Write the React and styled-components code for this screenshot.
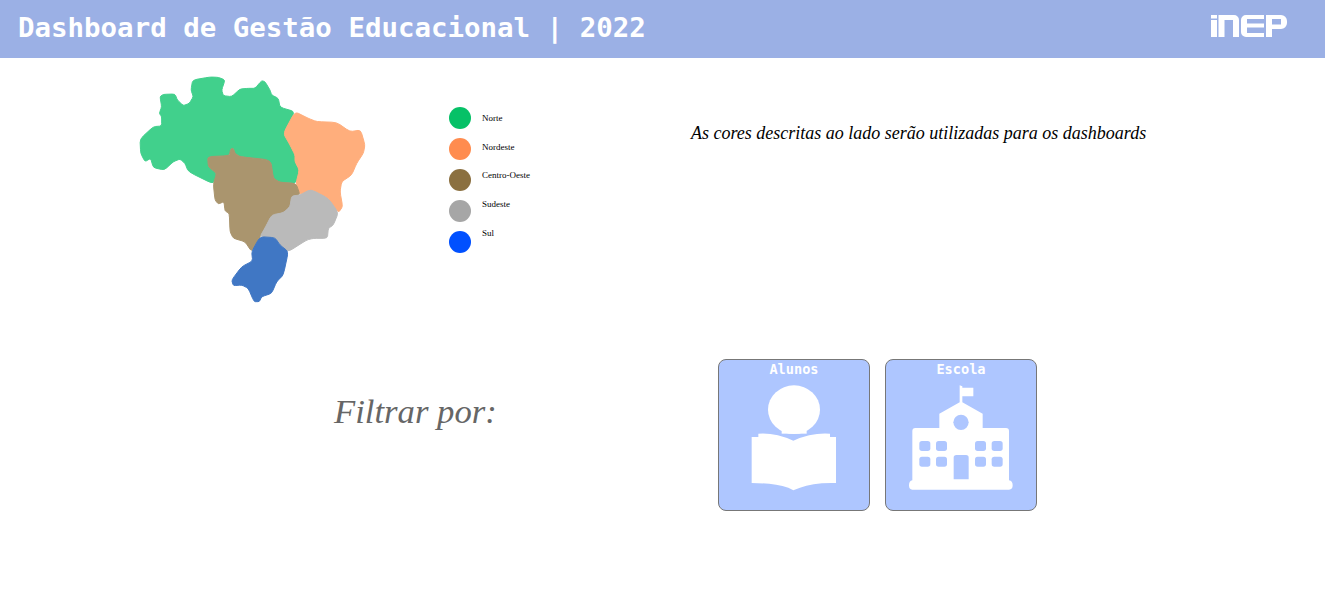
import React from "react";
import styled, { createGlobalStyle } from "styled-components";

const GlobalStyle = createGlobalStyle`
  html, body { margin: 0; padding: 0; background: #ffffff; }
`;

const Page = styled.div`
  width: 1325px;
  height: 593px;
  overflow: hidden;
  font-family: "Liberation Serif", serif;
`;
const Header = styled.header`
  height: 58px;
  box-sizing: border-box;
  background-color: #9bb0e5;
  display: flex;
  align-items: center;
  justify-content: space-between;
  padding: 0 38px 4px 18px;
`;
const Title = styled.h1`
  margin: 0;
  font-family: "DejaVu Sans Mono", monospace;
  font-size: 27.45px;
  font-weight: 700;
  color: #ffffff;
  white-space: nowrap;
`;
const Logo = styled.svg`
  display: block;
  margin-bottom: 3px;
`;
const TopRow = styled.section`
  height: 301px;
  display: flex;
  align-items: flex-start;
`;
const MapWrap = styled.div`
  width: 260px;
  height: 245px;
  margin: 7px 0 0 120px;
`;
const Legend = styled.div`
  display: flex;
  gap: 11px;
  margin: 49px 0 0 69px;
  width: 242px;
`;
const Dots = styled.div`
  display: flex;
  flex-direction: column;
  gap: 9px;
`;
const Dot = styled.span`
  display: block;
  width: 22px;
  height: 22px;
  border-radius: 50%;
  background-color: ${(props) => props.color};
`;
const Labels = styled.div`
  display: flex;
  flex-direction: column;
  margin-top: -3px;
`;
const Label = styled.span`
  height: 28.7px;
  line-height: 28px;
  font-size: 9px;
  color: #000000;
  white-space: nowrap;
`;
const Note = styled.p`
  margin: 65px 0 0 0;
  font-size: 18px;
  line-height: 20px;
  font-style: italic;
  color: #000000;
  white-space: nowrap;
`;
const BottomRow = styled.section`
  display: flex;
  align-items: flex-start;
  padding-left: 334px;
`;
const FilterTitle = styled.h2`
  width: 384px;
  margin: 31px 0 0 0;
  font-size: 34.7px;
  line-height: 44px;
  font-weight: 400;
  font-style: italic;
  color: #666666;
`;
const Cards = styled.div`
  display: flex;
  gap: 15px;
`;
const Card = styled.button`
  width: 152px;
  height: 152px;
  box-sizing: border-box;
  padding: 0;
  border: 1px solid #777777;
  border-radius: 8px;
  background-color: #aec6ff;
  display: flex;
  flex-direction: column;
  align-items: center;
`;
const CardLabel = styled.span`
  font-family: "DejaVu Sans Mono", monospace;
  font-size: 13.6px;
  line-height: 18px;
  font-weight: 700;
  color: #ffffff;
`;
const CardIcon = styled.svg`
  display: block;
  width: 150px;
  height: 132px;
`;

// pontos em coordenadas 3x do recorte do mapa, com cantos levemente arredondados
const outline = (pts) => {
  const lerp = (a, b, t) => [a[0] + (b[0] - a[0]) * t, a[1] + (b[1] - a[1]) * t];
  let d = "";
  pts.forEach((p, i) => {
    const prev = pts[(i - 1 + pts.length) % pts.length];
    const next = pts[(i + 1) % pts.length];
    const a = lerp(p, prev, 0.25);
    const b = lerp(p, next, 0.25);
    d += `${i ? "L" : "M"}${a[0]} ${a[1]}Q${p[0]} ${p[1]} ${b[0]} ${b[1]}`;
  });
  return d + "Z";
};

const regions = [
  {
    color: "#41d08c",
    pts: [[60,222],[100,185],[125,183],[125,155],[118,145],[125,125],[120,95],[130,88],[165,87],[172,105],[190,122],[208,115],[220,95],[213,75],[218,45],[270,36],[295,37],[315,45],[305,75],[310,92],[335,95],[360,72],[385,70],[405,70],[425,47],[435,50],[450,75],[455,90],[475,100],[480,127],[525,140],[490,205],[510,240],[525,270],[525,290],[538,315],[528,355],[480,352],[460,340],[452,285],[360,275],[345,265],[340,250],[332,252],[328,272],[263,275],[265,305],[290,325],[280,357],[205,320],[195,295],[180,282],[160,290],[133,315],[100,308],[92,280],[75,290],[62,265]],
  },
  {
    color: "#ffae7c",
    pts: [[525,140],[565,160],[590,170],[650,172],[690,200],[722,195],[735,240],[730,265],[710,295],[695,330],[665,350],[660,380],[668,425],[655,443],[625,400],[572,373],[540,390],[528,355],[538,315],[525,290],[525,270],[510,240],[490,205]],
  },
  {
    color: "#aa956e",
    pts: [[263,275],[328,272],[332,252],[340,250],[345,265],[360,275],[452,285],[460,340],[480,352],[528,355],[540,390],[515,393],[510,425],[490,443],[455,450],[437,485],[420,515],[395,560],[375,530],[340,520],[330,500],[328,445],[315,438],[312,410],[295,417],[285,405],[280,357],[290,325],[265,305]],
  },
  {
    color: "#bababa",
    pts: [[540,390],[572,373],[625,400],[655,443],[640,480],[625,490],[622,520],[580,520],[560,525],[505,560],[480,540],[465,518],[420,515],[437,485],[455,450],[490,443],[510,425],[515,393]],
  },
  {
    color: "#4077c4",
    pts: [[420,515],[465,518],[480,540],[505,560],[490,630],[470,650],[455,685],[425,695],[418,710],[402,710],[385,670],[365,660],[340,662],[335,645],[365,605],[398,588],[395,560]],
  },
];

const legendItems = [
  { name: "Norte", color: "#06c167" },
  { name: "Nordeste", color: "#ff8c4f" },
  { name: "Centro-Oeste", color: "#8b7040" },
  { name: "Sudeste", color: "#a6a6a6" },
  { name: "Sul", color: "#0050ff" },
];

function BrazilMap() {
  return (
    <svg width="260" height="245" viewBox="0 0 780 735">
      {regions.map((r) => (
        <path
          key={r.color}
          d={outline(r.pts)}
          fill={r.color}
          stroke={r.color}
          strokeWidth="3"
          strokeLinejoin="round"
        />
      ))}
    </svg>
  );
}

function InepLogo() {
  return (
    <Logo width="76" height="22" viewBox="0 0 76 22" fill="#ffffff">
      <rect x="0" y="0" width="6" height="3.5" />
      <rect x="0" y="5" width="6" height="17" />
      <path d="M7.5 0H23a5 5 0 0 1 5 5V22H22V5H13.5V22H7.5Z" />
      <path d="M35 0H53V4H36V8.5H53V12.5H36V18H53V22H35a5 5 0 0 1-5-5V5a5 5 0 0 1 5-5Z" />
      <path d="M55 0H70a6 6 0 0 1 6 6V8a6 6 0 0 1-6 6H61V22H55ZM61 4V9.5H70V4Z" fillRule="evenodd" />
    </Logo>
  );
}

export default function App() {
  return (
    <Page>
      <GlobalStyle />
      <Header>
        <Title>Dashboard de Gestão Educacional | 2022</Title>
        <InepLogo />
      </Header>
      <TopRow>
        <MapWrap>
          <BrazilMap />
        </MapWrap>
        <Legend>
          <Dots>
            {legendItems.map((item) => (
              <Dot key={item.name} color={item.color} />
            ))}
          </Dots>
          <Labels>
            {legendItems.map((item) => (
              <Label key={item.name}>{item.name}</Label>
            ))}
          </Labels>
        </Legend>
        <Note>As cores descritas ao lado serão utilizadas para os dashboards</Note>
      </TopRow>
      <BottomRow>
        <FilterTitle>Filtrar por:</FilterTitle>
        <Cards>
          <Card>
            <CardLabel>Alunos</CardLabel>
            <CardIcon viewBox="27 83 450 396" fill="#ffffff">
              <ellipse cx="252" cy="178" rx="78" ry="73" />
              <path d="M215 240H290V250H215Z" />
              <path d="M125 260H145V250Q195 246 250 271Q305 246 360 250V260H378V398Q310 396 270 412L250 420L235 412Q190 398 125 398Z" />
            </CardIcon>
          </Card>
          <Card>
            <CardLabel>Escola</CardLabel>
            <CardIcon viewBox="528 83 450 396" fill="#ffffff">
              <path d="M749 105L757 108V112H790V138H757V156L818 190V233H888Q897 233 897 242V390Q908 392 908 405Q908 418 897 418H607Q597 418 597 405Q597 392 607 390V242Q607 233 616 233H688V190L749 156Z" />
              <g fill="#aec6ff">
                <circle cx="753" cy="216" r="23" />
                <rect x="628" y="272" width="33" height="30" rx="8" />
                <rect x="678" y="272" width="33" height="30" rx="8" />
                <rect x="795" y="272" width="33" height="30" rx="8" />
                <rect x="845" y="272" width="33" height="30" rx="8" />
                <rect x="628" y="319" width="33" height="30" rx="8" />
                <rect x="678" y="319" width="33" height="30" rx="8" />
                <rect x="795" y="319" width="33" height="30" rx="8" />
                <rect x="845" y="319" width="33" height="30" rx="8" />
                <path d="M731 322Q731 314 739 314H768Q776 314 776 322V387H731Z" />
              </g>
            </CardIcon>
          </Card>
        </Cards>
      </BottomRow>
    </Page>
  );
}
